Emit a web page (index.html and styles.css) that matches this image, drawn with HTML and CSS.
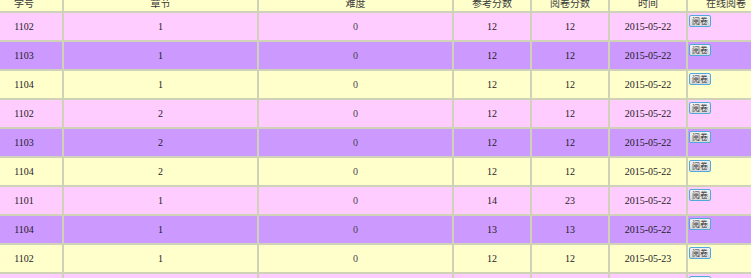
FILE: index.html
```html
<!DOCTYPE html>
<html lang="zh">
<head>
<meta charset="utf-8">
<title>阅卷列表</title>
<link rel="stylesheet" href="styles.css">
</head>
<body>
<div class="viewport">
<table class="grid">
  <colgroup>
    <col class="c-s"><col class="c-l"><col class="c-l"><col class="c-s"><col class="c-s"><col class="c-s"><col class="c-s">
  </colgroup>
  <thead>
    <tr class="head"><th>学号</th><th>章节</th><th>难度</th><th>参考分数</th><th>阅卷分数</th><th>时间</th><th>在线阅卷</th></tr>
  </thead>
  <tbody>
    <tr class="pink"><td>1102</td><td>1</td><td class="dim">0</td><td>12</td><td>12</td><td>2015-05-22</td><td class="act"><button class="btn">阅卷</button></td></tr>
    <tr class="purple"><td>1103</td><td>1</td><td class="dim">0</td><td>12</td><td>12</td><td>2015-05-22</td><td class="act"><button class="btn">阅卷</button></td></tr>
    <tr class="yellow"><td>1104</td><td>1</td><td class="dim">0</td><td>12</td><td>12</td><td>2015-05-22</td><td class="act"><button class="btn">阅卷</button></td></tr>
    <tr class="pink"><td>1102</td><td>2</td><td class="dim">0</td><td>12</td><td>12</td><td>2015-05-22</td><td class="act"><button class="btn">阅卷</button></td></tr>
    <tr class="purple"><td>1103</td><td>2</td><td class="dim">0</td><td>12</td><td>12</td><td>2015-05-22</td><td class="act"><button class="btn">阅卷</button></td></tr>
    <tr class="yellow"><td>1104</td><td>2</td><td class="dim">0</td><td>12</td><td>12</td><td>2015-05-22</td><td class="act"><button class="btn">阅卷</button></td></tr>
    <tr class="pink"><td>1101</td><td>1</td><td class="dim">0</td><td>14</td><td>23</td><td>2015-05-22</td><td class="act"><button class="btn">阅卷</button></td></tr>
    <tr class="purple"><td>1104</td><td>1</td><td class="dim">0</td><td>13</td><td>13</td><td>2015-05-22</td><td class="act"><button class="btn">阅卷</button></td></tr>
    <tr class="yellow"><td>1102</td><td>1</td><td class="dim">0</td><td>12</td><td>12</td><td>2015-05-23</td><td class="act"><button class="btn">阅卷</button></td></tr>
    <tr class="pink"><td>1103</td><td>3</td><td class="dim">0</td><td>12</td><td>12</td><td>2015-05-23</td><td class="act"><button class="btn">阅卷</button></td></tr>
  </tbody>
</table>
</div>
</body>
</html>
```
FILE: styles.css
```css
html, body {
  margin: 0;
  padding: 0;
  overflow: hidden;
  background: #ffffff;
}
.viewport {
  width: 751px;
  height: 278px;
  overflow: hidden;
}
.grid {
  border-collapse: separate;
  border-spacing: 0;
  table-layout: fixed;
  width: 780px;
  margin-left: -15px;
  margin-top: -6px;
  font-family: "Liberation Serif", "Noto Sans CJK SC", serif;
  font-size: 10px;
  color: #1e1a24;
}
.c-s { width: 78px; }
.c-l { width: 195px; }
.grid th,
.grid td {
  border: 1px solid #cfd2b6;
  padding: 0;
  text-align: center;
  vertical-align: middle;
}
.grid th {
  height: 16px;
  line-height: 16px;
  font-family: "Noto Sans CJK SC", "Liberation Sans", sans-serif;
  font-weight: normal;
  font-size: 10px;
  color: #3a3a3a;
  background: #ffffcc;
}
.grid td {
  height: 27px;
}
.grid td.dim {
  color: #4a4450;
}
.pink td { background: #ffccff; }
.purple td { background: #cc99ff; }
.yellow td { background: #ffffcc; }
.grid td.act {
  height: 25px;
  text-align: left;
  vertical-align: top;
  padding: 2px 0 0 1px;
}
.btn {
  display: block;
  width: 22px;
  height: 12px;
  padding: 0;
  margin: 0;
  border: 1px solid #4fa9dd;
  border-radius: 2px;
  background: linear-gradient(#f2f2f2, #d8d8d8);
  font-family: "Noto Sans CJK SC", sans-serif;
  font-size: 8px;
  line-height: 10px;
  color: #333;
  text-align: center;
}
```
